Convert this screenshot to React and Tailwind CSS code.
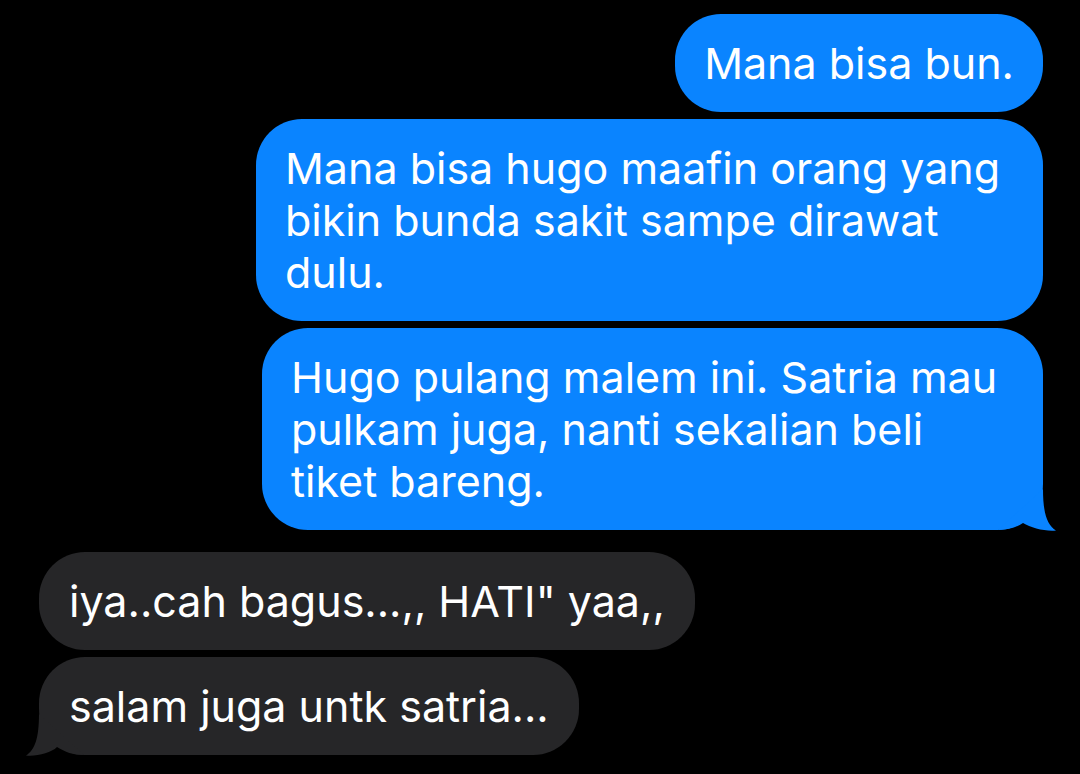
import React from 'react';

const BlueTail = () => (
  <svg className="absolute right-[-15px] bottom-[-1px]" width="63" height="42" viewBox="0 0 63 42">
    <path d="M48 0 C48 24 52 36 61 41.5 C50 42.5 36 39 28 34 C22 38 14 41 3 41 Z" fill="#0a84ff" />
  </svg>
);

const GrayTail = () => (
  <svg className="absolute left-[-15px] bottom-[-1px]" width="63" height="42" viewBox="0 0 63 42">
    <path d="M15 0 C15 24 11 36 2 41.5 C13 42.5 27 39 33 33 C41 38 49 41 60 41 Z" fill="#262628" />
  </svg>
);

const Sent = ({ children, className = '', tail }) => (
  <div className={`relative bg-[#0a84ff] text-white rounded-[46px] px-[29px] py-[23px] ${className}`}>
    {children}
    {tail && <BlueTail />}
  </div>
);

const Received = ({ children, tail }) => (
  <div className="relative bg-[#262628] text-white rounded-[46px] px-[30px] py-[23px]">
    {children}
    {tail && <GrayTail />}
  </div>
);

export default function App() {
  return (
    <div
      className="w-full h-[774px] bg-black overflow-hidden flex flex-col pt-[14px] text-[43px] leading-[52px]"
      style={{ fontFamily: 'Inter, "Noto Sans", sans-serif' }}
    >
      <div className="flex flex-col items-end gap-[7px] pr-[37px]">
        <Sent>Mana bisa bun.</Sent>
        <Sent className="w-[787px]">
          Mana bisa hugo maafin orang yang
          <br />
          bikin bunda sakit sampe dirawat
          <br />
          dulu.
        </Sent>
        <Sent className="w-[781px]" tail>
          Hugo pulang malem ini. Satria mau
          <br />
          pulkam juga, nanti sekalian beli
          <br />
          tiket bareng.
        </Sent>
      </div>
      <div className="flex flex-col items-start gap-[7px] pl-[39px] mt-[22px]">
        <Received>iya..cah bagus...,, HATI" yaa,,</Received>
        <Received tail>salam juga untk satria...</Received>
      </div>
    </div>
  );
}
